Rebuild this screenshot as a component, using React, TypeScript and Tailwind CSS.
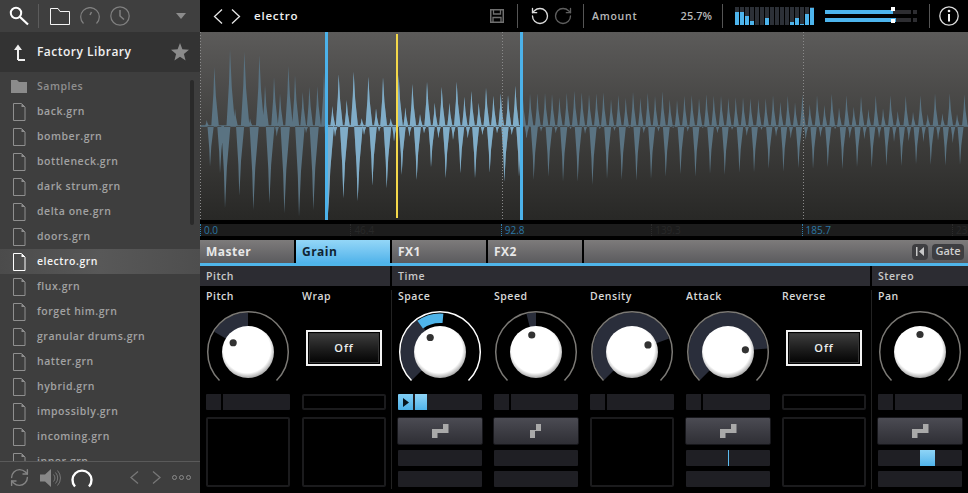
import * as React from 'react'
import { RefreshCw, RotateCcw, RotateCw } from 'lucide-react'

const FONT = "font-['Open_Sans',sans-serif]"

const files = [
  'back.grn', 'bomber.grn', 'bottleneck.grn', 'dark strum.grn', 'delta one.grn', 'doors.grn', 'electro.grn',
  'flux.grn', 'forget him.grn', 'granular drums.grn', 'hatter.grn', 'hybrid.grn', 'impossibly.grn', 'incoming.grn', 'inner.grn',
]

// peaks read off the reference: [x, y] in page pixels
const z1 = (p: number[][]) => p.map(([x, y]) => [200 + x / 3, 30 + y / 3])
const z2 = (p: number[][]) => p.map(([x, y]) => [520 + x / 3, 30 + y / 3])

const topPeaks = [
  ...z1([[20,270],[43,110],[90,58],[105,235],[133,65],[150,265],[178,75],[195,165],[222,140],[240,190],[265,108],[285,135],[308,185],[328,170],[352,168],[372,125],[397,228],[416,133],[440,210],[461,125],[485,265],[505,140],[528,235],[549,142],[572,265],[596,135],[616,232],[637,162],[660,252],[681,155],[704,218],[725,170],[748,218],[770,155],[793,200],[814,183],[836,218],[858,173],[880,197],[902,190],[924,195],[946,167],[968,210],[990,190]]),
  ...z2([[8,193],[30,193],[52,190],[75,188],[96,192],[118,202],[140,188],[163,182],[185,187],[207,193],[229,190],[250,187],[273,207],[295,195],[317,203],[339,185],[361,203],[383,188],[405,197],[427,184],[449,208],[471,210],[493,197],[515,195],[537,205],[559,193],[581,197],[603,197],[625,204],[647,202],[669,202],[691,205],[715,207],[737,205],[759,196],[781,215],[803,197],[825,217],[847,193],[869,223],[891,196],[913,225],[935,191],[957,232],[979,196],[1001,230],[1023,198],[1045,237],[1067,196],[1089,235],[1111,196],[1133,243],[1157,197],[1179,245],[1201,196],[1223,252],[1245,190],[1267,250],[1289,190],[1311,252],[1333,193]]),
]
const bottomPeaks = [
  ...z1([[30,410],[60,430],[75,535],[118,497],[160,540],[208,520],[230,320],[253,550],[297,560],[318,310],[340,540],[385,550],[405,320],[430,505],[473,513],[492,315],[517,467],[537,305],[560,475],[582,335],[605,435],[628,320],[650,450],[672,310],[693,412],[715,325],[737,445],[759,330],[781,430],[803,325],[825,445],[847,315],[869,428],[891,310],[913,455],[935,315],[957,440],[979,325],[1001,450]]),
  ...z2([[20,325],[41,450],[63,305],[85,440],[107,310],[129,455],[151,298],[173,455],[195,312],[217,465],[239,298],[261,447],[283,303],[305,450],[327,295],[349,452],[371,310],[393,447],[415,305],[437,440],[459,295],[481,433],[503,305],[526,440],[548,295],[570,432],[592,310],[614,435],[636,300],[658,428],[680,318],[702,427],[724,300],[746,417],[768,320],[790,425],[812,326],[835,415],[857,330],[879,417],[901,322],[923,412],[945,298],[967,418],[989,326],[1011,412],[1033,328],[1055,413],[1077,326],[1099,408],[1122,336],[1144,408],[1166,334],[1188,403],[1210,336],[1232,405],[1254,332],[1276,407],[1298,340],[1320,405]]),
]

const BASE = 126
const spikes = () => {
  let d = `M200 ${BASE - 0.8}H968V${BASE + 0.8}H200Z`
  for (const [x, y] of [...topPeaks, ...bottomPeaks]) {
    const h = Math.abs(BASE - y)
    const up = y < BASE ? -1 : 1
    const hw = 1.7 + h * 0.032
    // the reference spikes lean a little: steep rise, slower fall
    const right = hw * 1.25
    const left = hw * 0.85
    d += `M${x - left} ${BASE}L${x - left * 0.3} ${BASE + up * h * 0.55}L${x} ${y}L${x + right * 0.35} ${BASE + up * h * 0.5}L${x + right} ${BASE}Z`
  }
  return d
}

const Waveform = () => {
  const d = spikes()
  return (
    <svg width="768" height="188" viewBox="200 32 768 188" className="block">
      <defs>
        <clipPath id="selected"><rect x="325" y="32" width="196" height="188" /></clipPath>
      </defs>
      <path d={d} fill="#5a7382" />
      <path d={d} fill="#80adc8" clipPath="url(#selected)" />
      <path d="M200.5 32V220M502.5 32V220M803.5 32V220" stroke="#8a8a8a" strokeDasharray="1 2" />
      <rect x="325" y="32" width="3" height="188" fill="#4cb2ea" />
      <rect x="520" y="32" width="3" height="188" fill="#4cb2ea" />
      <rect x="396" y="34" width="2" height="184" fill="#f4d84a" />
    </svg>
  )
}

const pt = (r: number, deg: number, c = 42) => {
  const a = ((deg - 90) * Math.PI) / 180
  return `${c + r * Math.cos(a)} ${c + r * Math.sin(a)}`
}
const band = (r1: number, r2: number, from: number, to: number) => {
  const large = to - from > 180 ? 1 : 0
  return `M${pt(r2, from)}A${r2} ${r2} 0 ${large} 1 ${pt(r2, to)}L${pt(r1, to)}A${r1} ${r1} 0 ${large} 0 ${pt(r1, from)}Z`
}

type KnobProps = { dot: number; from?: number; to?: number; active?: boolean; id: string }

const Knob = ({ dot, from, to, active, id }: KnobProps) => {
  const a = (dot * Math.PI) / 180
  return (
    <svg width="84" height="84" viewBox="0 0 84 84" className="block mt-[5px]">
      <defs>
        <radialGradient id={id} cx="0.48" cy="0.45" r="0.55">
          <stop offset="0.82" stopColor="#ffffff" />
          <stop offset="1" stopColor="#a8a8a8" />
        </radialGradient>
      </defs>
      {from !== undefined && to !== undefined && <path d={band(25, 39.5, from, to)} fill="#2a2e3b" />}
      {active && <path d={band(29, 38.5, -36, 5)} fill="#4fb5ea" />}
      <path
        d={`M${pt(40.3, -135)}A40.3 40.3 0 1 1 ${pt(40.3, 135)}`}
        fill="none"
        stroke={active ? '#ffffff' : '#7b7975'}
        strokeWidth="1.5"
      />
      <circle cx="42" cy="42" r="26" fill={`url(#${id})`} />
      <circle cx={42 + 17.5 * Math.sin(a)} cy={42 - 17.5 * Math.cos(a)} r="3.6" fill="#323232" />
    </svg>
  )
}

const OffButton = () => (
  <div className="mt-[5px] h-[84px] flex justify-center pt-[20px]">
    <div className="w-[76px] h-[36px] border-2 border-[#f2f2f2] bg-black p-px">
      <div className="h-full border border-[#333] bg-linear-to-b from-[#3c3c3c] to-[#060606] flex items-center justify-center text-[11px] font-semibold text-[#eee] tracking-[0.08em]">
        Off
      </div>
    </div>
  </div>
)

const StepIcon = ({ narrow }: { narrow?: boolean }) => (
  <svg width={narrow ? 12 : 17} height="14" viewBox={narrow ? '0 0 12 14' : '0 0 17 14'}>
    <path
      d={narrow ? 'M6 0H11V7H5V14H0V6H6Z' : 'M11 0H16.5V9H5.5V14H0V5H11Z'}
      fill="#a9a9a9"
    />
  </svg>
)

const ModButton = ({ narrow }: { narrow?: boolean }) => (
  <div className="-mx-px h-[28px] rounded-[2px] border border-[#17171b] bg-linear-to-b from-[#4b4b53] to-[#2f2f35] flex items-center justify-center">
    <StepIcon narrow={narrow} />
  </div>
)

const Bar = ({ children }: { children?: React.ReactNode }) => (
  <div className="h-[16px] rounded-[1px] bg-[#1f1f24] flex overflow-hidden">{children}</div>
)

const NotchBar = () => (
  <div className="h-[16px] flex gap-[2px]">
    <div className="w-[15px] rounded-l-[1px] bg-[#1f1f24]" />
    <div className="flex-1 rounded-r-[1px] bg-[#1f1f24]" />
  </div>
)

const EmptyBox = () => <div className="mt-[7px] h-[70px] rounded-[2px] border-2 border-[#1b1b1d]" />
const OutlineBar = () => <div className="h-[16px] rounded-[2px] border-2 border-[#1b1b1d]" />

const Col = ({ label, divider, children }: { label: string; divider?: boolean; children: React.ReactNode }) => (
  <div className={`w-[96px] h-[199px] pl-[6px] ${divider ? 'border-r border-[#222]' : ''}`}>
    <div className="w-[84px]">
      <div className="h-[15px] text-[10.5px] leading-[12px] font-semibold text-[#d8d8d8] tracking-[0.05em] whitespace-nowrap">{label}</div>
      {children}
    </div>
  </div>
)

const ModStack = ({ narrow, third, fourth }: { narrow?: boolean; third?: React.ReactNode; fourth?: React.ReactNode }) => (
  <div className="mt-[7px] flex flex-col gap-[5px]">
    <ModButton narrow={narrow} />
    <Bar>{third}</Bar>
    <Bar>{fourth}</Bar>
  </div>
)

const FileIcon = ({ on }: { on?: boolean }) => (
  <svg width="13" height="18" viewBox="0 0 13 18" className="shrink-0">
    <path d="M.5.5H8.5L12 4V17.5H.5Z" fill="none" stroke={on ? '#fff' : '#8f8f8f'} />
    <path d="M8.5 1V4H12Z" fill={on ? '#fff' : '#8f8f8f'} />
  </svg>
)

const Sep = () => <div className="w-px h-[24px] bg-[#555] shrink-0" />

const Sidebar = () => (
  <div className="w-[200px] h-[493px] shrink-0 flex flex-col bg-[#3e3e3e]">
    <div className="h-[32px] shrink-0 flex items-center pl-[9px] pr-[14px] bg-[#3f3f3f]">
      <svg width="20" height="20" viewBox="0 0 20 20" fill="none" stroke="#fff" className="shrink-0">
        <circle cx="7" cy="7" r="5.2" strokeWidth="2" />
        <path d="M11 11L19 18.5" strokeWidth="2.2" />
      </svg>
      <div className="w-px h-[24px] bg-[#5c5c5c] ml-[9px]" />
      <svg width="20" height="17" viewBox="0 0 20 17" fill="none" stroke="#f4f4f4" className="ml-[11px]">
        <path d="M.5 16.5V.5H8L10 3.5H19.5V16.5Z" />
      </svg>
      <svg width="20" height="18" viewBox="0 0 20 18" fill="none" stroke="#808080" strokeWidth="1.2" className="ml-[10px]">
        <path d="M3.5 16.5A9.3 9.3 0 1 1 16.5 16.5" />
        <path d="M11.5 5L10 8" strokeWidth="1.6" />
      </svg>
      <svg width="20" height="20" viewBox="0 0 20 20" fill="none" stroke="#808080" strokeWidth="1.2" className="ml-[10px]">
        <circle cx="10" cy="10" r="9.2" />
        <path d="M10 4V10L14 13.5" strokeWidth="1.5" />
      </svg>
      <svg width="10" height="6" viewBox="0 0 10 6" className="ml-auto">
        <path d="M0 0H10L5 6Z" fill="#8c8c8c" />
      </svg>
    </div>
    <div className="h-[40px] shrink-0 flex items-center bg-[#333] pl-[13px] pr-[11px]">
      <svg width="12" height="17" viewBox="0 0 12 17" className="shrink-0">
        <path d="M5 16V2M5 16H12" stroke="#f0f0f0" strokeWidth="2" fill="none" />
        <path d="M1 6L5 .5L9 6Z" fill="#f0f0f0" />
      </svg>
      <span className="ml-[12px] text-[12px] font-semibold text-[#f0f0f0] tracking-[0.04em] whitespace-nowrap">Factory Library</span>
      <svg width="18" height="18" viewBox="0 0 18 18" className="ml-auto">
        <path d="M9 0L11.4 6.2L18 6.7L12.9 10.9L14.6 17.5L9 13.8L3.4 17.5L5.1 10.9L0 6.7L6.6 6.2Z" fill="#8a8a8a" />
      </svg>
    </div>
    <div className="relative flex-1 min-h-0 overflow-hidden pt-[2px]">
      <div className="h-[25px] flex items-center pl-[11px]">
        <svg width="16" height="13" viewBox="0 0 16 13" className="shrink-0">
          <path d="M0 13V0H6L8 2H16V13Z" fill="#8b8b8b" />
        </svg>
        <span className="ml-[10px] text-[10.5px] font-semibold text-[#8f8f8f] tracking-[0.05em]">Samples</span>
      </div>
      {files.map((f) => {
        const on = f === 'electro.grn'
        return (
          <div
            key={f}
            className={`h-[25px] flex items-center pl-[13px] ${on ? 'bg-linear-to-r from-[#4b4b4b] via-[#585858] to-[#4e4e4e]' : ''}`}
          >
            <FileIcon on={on} />
            <span className={`ml-[11px] text-[10.5px] font-semibold tracking-[0.05em] whitespace-nowrap ${on ? 'text-[#f4f4f4]' : 'text-[#a2a2a2]'}`}>
              {f}
            </span>
          </div>
        )
      })}
      <div className="absolute left-[190px] top-[8px] w-[4px] h-[145px] rounded-[2px] bg-[#2a2a2a]" />
    </div>
    <div className="h-[32px] shrink-0 border-t border-[#5a5a5a] flex items-center pl-[9px] pr-[8px] bg-[#3e3e3e]">
      <RefreshCw size={21} strokeWidth={1.6} color="#858585" className="shrink-0" />
      <svg width="21" height="18" viewBox="0 0 21 18" fill="none" className="ml-[10px] shrink-0">
        <path d="M0 5.5H5L11 0V18L5 12.5H0Z" fill="#888" />
        <path d="M13.5 5.5A5 5 0 0 1 13.5 12.5M15.5 3.5A8 8 0 0 1 15.5 14.5M17.5 1.5A11 11 0 0 1 17.5 16.5" stroke="#777" strokeWidth="1" />
      </svg>
      <svg width="22" height="20" viewBox="0 0 22 20" fill="none" className="ml-[10px] shrink-0">
        <path d="M4 18.5A9.5 9.5 0 1 1 18 18.5" stroke="#fff" strokeWidth="2.4" />
      </svg>
      <svg width="9" height="13" viewBox="0 0 9 13" fill="none" stroke="#777" strokeWidth="1.3" className="ml-[37px] shrink-0">
        <path d="M8 .5L1 6.5L8 12.5" />
      </svg>
      <svg width="9" height="13" viewBox="0 0 9 13" fill="none" stroke="#777" strokeWidth="1.3" className="ml-[13px] shrink-0">
        <path d="M1 .5L8 6.5L1 12.5" />
      </svg>
      <svg width="19" height="5" viewBox="0 0 19 5" fill="none" stroke="#8a8a8a" className="ml-[11px] shrink-0">
        <circle cx="2.5" cy="2.5" r="2" />
        <circle cx="9.5" cy="2.5" r="2" />
        <circle cx="16.5" cy="2.5" r="2" />
      </svg>
    </div>
  </div>
)

const meter = [13, 13, 9, 4, 0, 0, 7, 0, 0, 0, 0, 3, 7, 1, 11, 17]

const TopBar = () => (
  <div className="h-[32px] shrink-0 bg-black flex items-center">
    <svg width="10" height="15" viewBox="0 0 10 15" fill="none" stroke="#e6e6e6" strokeWidth="1.3" className="ml-[13px] shrink-0">
      <path d="M9 .5L1.5 7.5L9 14.5" />
    </svg>
    <svg width="10" height="15" viewBox="0 0 10 15" fill="none" stroke="#e6e6e6" strokeWidth="1.3" className="ml-[8px] shrink-0">
      <path d="M1 .5L8.5 7.5L1 14.5" />
    </svg>
    <span className="ml-[13px] w-[236px] shrink-0 text-[11.5px] font-semibold text-[#f0f0f0] tracking-[0.07em]">electro</span>
    <svg width="14" height="14" viewBox="0 0 14 14" fill="none" stroke="#6f6f6f" className="shrink-0">
      <path d="M.75.75H13.25V13.25H.75Z" strokeWidth="1.5" />
      <path d="M3.5 1V5H10.5V1" strokeWidth="1.3" />
      <path d="M3 13V8.5H11V13" strokeWidth="1.3" />
    </svg>
    <div className="ml-[13px]"><Sep /></div>
    <RotateCcw size={20} strokeWidth={1.6} color="#dcdcdc" className="ml-[12px] shrink-0" />
    <RotateCw size={20} strokeWidth={1.6} color="#5f5f5f" className="ml-[3px] shrink-0" />
    <div className="ml-[10px]"><Sep /></div>
    <span className="ml-[8px] w-[55px] shrink-0 pt-px text-[10.5px] font-semibold text-[#b8b8b8] tracking-[0.07em]">Amount</span>
    <span className="w-[65px] shrink-0 text-right text-[11px] font-semibold text-[#b8b8b8]">25.7%</span>
    <div className="ml-[10px]"><Sep /></div>
    <div className="ml-[12px] h-[18px] flex gap-px shrink-0">
      {meter.map((h, i) => (
        <div key={i} className="w-[4px] h-full bg-[#2c3037] flex flex-col justify-end">
          <div className="bg-[#4db4ec]" style={{ height: h }} />
        </div>
      ))}
    </div>
    <div className="relative ml-[11px] w-[92px] h-[14px] shrink-0 flex flex-col justify-between py-[1px]">
      {[68, 71].map((w) => (
        <div key={w} className="h-[4px] flex">
          <div className="w-[86px] bg-[#2d2d31]">
            <div className="h-full bg-[#4db4ec]" style={{ width: w }} />
          </div>
          <div className="ml-[2px] w-[4px] bg-[#2d2d31]" />
        </div>
      ))}
      <div className="absolute left-[66px] top-[-2px] w-[4px] h-[4px] bg-white" />
      <div className="absolute left-[66px] top-[10px] w-[4px] h-[4px] bg-white" />
    </div>
    <div className="ml-[12px]"><Sep /></div>
    <svg width="20" height="20" viewBox="0 0 20 20" fill="none" className="ml-[9px] shrink-0">
      <circle cx="10" cy="10" r="9.2" stroke="#dcdcdc" strokeWidth="1.3" />
      <path d="M10 8V15.5" stroke="#f0f0f0" strokeWidth="2" />
      <circle cx="10" cy="5" r="1.3" fill="#f0f0f0" />
    </svg>
  </div>
)

const ruler = [
  { t: '0.0', on: true }, { t: '46.4' }, { t: '92.8', on: true }, { t: '139.3' }, { t: '185.7', on: true }, { t: '232' },
]

const Ruler = () => (
  <div className="mt-[4px] h-[12px] shrink-0 bg-[#1c1c1c] flex overflow-hidden">
    {ruler.map((r) => (
      <div
        key={r.t}
        className={`w-[150.4px] shrink-0 pl-[3px] border-l border-dotted text-[10px] leading-[12px] ${r.on ? 'border-[#2f7fae] text-[#2b77a5]' : 'border-[#2c2c2c] text-[#282828]'}`}
      >
        {r.t}
      </div>
    ))}
  </div>
)

const Tab = ({ label, on }: { label: string; on?: boolean }) => (
  <div
    className={`w-[94px] shrink-0 pl-[6px] flex items-center text-[12px] font-bold tracking-[0.04em] ${on ? 'bg-linear-to-b from-[#93d6f7] to-[#4fb3ea] text-[#0f2433]' : 'bg-linear-to-b from-[#7d7b7b] to-[#5b5b5e] text-[#e8e8e8]'}`}
  >
    {label}
  </div>
)

const Tabs = () => (
  <>
    <div className="mt-[4px] h-[23px] shrink-0 flex gap-[2px]">
      <Tab label="Master" />
      <Tab label="Grain" on />
      <Tab label="FX1" />
      <Tab label="FX2" />
      <div className="flex-1 bg-linear-to-b from-[#7d7b7b] to-[#5b5b5e] flex items-center justify-end gap-[4px] pr-[4px]">
        <div className="w-[16px] h-[16px] rounded-[4px] bg-[#3e3e41] flex items-center justify-center">
          <svg width="9" height="9" viewBox="0 0 9 9">
            <path d="M0 0H1.5V9H0ZM8 0V9L3 4.5Z" fill="#c8c8c8" />
          </svg>
        </div>
        <div className="w-[32px] h-[16px] rounded-[4px] bg-[#3e3e41] flex items-center justify-center text-[11px] font-semibold text-[#cfcfcf]">Gate</div>
      </div>
    </div>
    <div className="h-[3px] shrink-0 bg-[#4fb5ea]" />
  </>
)

const Section = ({ label, className }: { label: string; className: string }) => (
  <div className={`h-[20px] shrink-0 bg-[#2c2c32] pl-[6px] pt-px flex items-center text-[10.5px] font-semibold text-[#c9c9c9] tracking-[0.05em] ${className}`}>
    {label}
  </div>
)

const Controls = () => (
  <>
    <div className="h-[20px] shrink-0 flex gap-[2px]">
      <Section label="Pitch" className="w-[190px]" />
      <Section label="Time" className="w-[478px]" />
      <Section label="Stereo" className="flex-1" />
    </div>
    <div className="mt-[4px] flex">
      <Col label="Pitch">
        <Knob id="k1" dot={-58} from={-59} to={0} />
        <NotchBar />
        <EmptyBox />
      </Col>
      <Col label="Wrap" divider>
        <OffButton />
        <OutlineBar />
        <EmptyBox />
      </Col>
      <Col label="Space">
        <Knob id="k2" dot={-34} from={-135} to={-34} active />
        <Bar>
          <div className="w-[15px] bg-linear-to-b from-[#7fcdf4] to-[#4cb1e8] flex items-center justify-center">
            <svg width="6" height="9" viewBox="0 0 6 9"><path d="M0 0L6 4.5L0 9Z" fill="#07141c" /></svg>
          </div>
          <div className="ml-[2px] w-[12px] bg-linear-to-b from-[#8ed4f6] to-[#4fb3ea]" />
        </Bar>
        <ModStack />
      </Col>
      <Col label="Speed">
        <Knob id="k3" dot={-14} from={-14} to={0} />
        <NotchBar />
        <ModStack narrow />
      </Col>
      <Col label="Density">
        <Knob id="k4" dot={66} from={-135} to={70} />
        <NotchBar />
        <EmptyBox />
      </Col>
      <Col label="Attack">
        <Knob id="k5" dot={83} from={-135} to={85} />
        <NotchBar />
        <ModStack third={<div className="ml-[42px] w-px bg-[#5cbcf0]" />} />
      </Col>
      <Col label="Reverse" divider>
        <OffButton />
        <OutlineBar />
        <EmptyBox />
      </Col>
      <Col label="Pan">
        <Knob id="k6" dot={0} />
        <NotchBar />
        <ModStack third={<div className="ml-[42px] w-[15px] bg-linear-to-b from-[#8ed4f6] to-[#4fb3ea]" />} />
      </Col>
    </div>
  </>
)

export default function App() {
  return (
    <div className={`w-[968px] h-[493px] flex overflow-hidden bg-black ${FONT}`}>
      <Sidebar />
      <div className="w-[768px] h-[493px] flex flex-col">
        <TopBar />
        <div className="h-[188px] shrink-0 bg-linear-to-b from-[#5c5b5a] to-[#282826]">
          <Waveform />
        </div>
        <Ruler />
        <Tabs />
        <Controls />
      </div>
    </div>
  )
}
